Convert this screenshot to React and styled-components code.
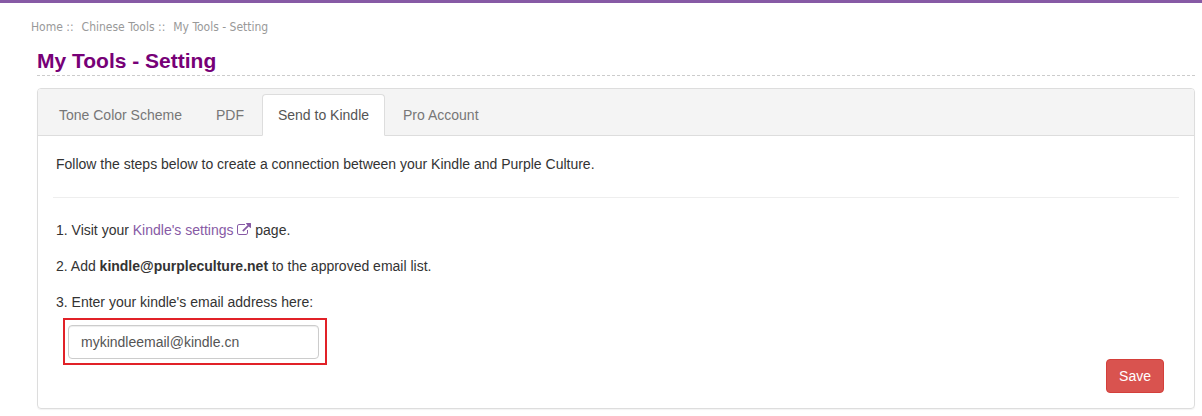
import React, { useState } from "react";
import styled, { createGlobalStyle } from "styled-components";

const GlobalStyle = createGlobalStyle`
  *, *::before, *::after { box-sizing: border-box; }
  body {
    margin: 0;
    background: #fff;
    color: #333;
    font: 14px/20px "Liberation Sans", Arial, sans-serif;
  }
`;

const Page = styled.div`
  border-top: 3px solid #875aa5;
`;

const Breadcrumb = styled.nav`
  display: flex;
  gap: 8px;
  padding: 14px 31px 0;
  color: #999;
  font: 12px/20px "DejaVu Sans Condensed", Tahoma, sans-serif;
`;

const Crumb = styled.a`
  color: inherit;
  text-decoration: none;
`;

const Main = styled.main`
  padding: 12px 7px 8px 37px;
`;

const Title = styled.h1`
  margin: 0 0 12px;
  padding-bottom: 2px;
  border-bottom: 1px dashed #ccc;
  color: #770077;
  font-size: 21px;
  line-height: 24px;
`;

const Panel = styled.section`
  border: 1px solid #ddd;
  border-radius: 4px;
  box-shadow: 0 1px 1px rgba(0, 0, 0, 0.05);
`;

const Tabs = styled.div`
  display: flex;
  gap: 2px;
  padding: 5px 5px 0;
  border-bottom: 1px solid #ddd;
  border-radius: 3px 3px 0 0;
  background: #f4f4f4;
`;

const Tab = styled.button`
  margin: 0 0 -1px;
  padding: 10px 15px;
  border: 1px solid ${(p) => (p.$active ? "#ddd" : "transparent")};
  border-bottom-color: ${(p) => (p.$active ? "#fff" : "transparent")};
  border-radius: 4px 4px 0 0;
  background: ${(p) => (p.$active ? "#fff" : "transparent")};
  color: ${(p) => (p.$active ? "#555" : "#777")};
  font: inherit;
  cursor: pointer;
`;

const Body = styled.form`
  padding: 18px 15px 15px;
`;

const Text = styled.p`
  margin: 0 0 16px;
  padding: 0 3px;
`;

const Divider = styled.hr`
  margin: 23px 0 22px;
  border: 0;
  border-top: 1px solid #eee;
`;

const Link = styled.a`
  color: #875aa5;
  text-decoration: none;
`;

const LinkIcon = styled.svg`
  width: 14px;
  height: 14px;
  fill: currentColor;
  vertical-align: -2px;
`;

const FieldLabel = styled.label`
  display: block;
  margin-bottom: 6px;
  padding: 0 3px;
`;

const Highlight = styled.div`
  width: 264px;
  max-width: 100%;
  margin-left: 10px;
  padding: 5px 6px 4px 3px;
  border: 2px solid #e12128;
`;

const EmailInput = styled.input`
  display: block;
  width: 100%;
  height: 34px;
  padding: 6px 12px;
  border: 1px solid #ccc;
  border-radius: 4px;
  box-shadow: inset 0 1px 1px rgba(0, 0, 0, 0.075);
  background: #fff;
  color: #555;
  font: inherit;
`;

const Actions = styled.div`
  display: flex;
  justify-content: flex-end;
  margin-top: -6px;
  padding-right: 15px;
`;

const SaveButton = styled.button`
  padding: 6px 12px;
  border: 1px solid #d43f3a;
  border-radius: 4px;
  background: #d9534f;
  color: #fff;
  font: inherit;
  cursor: pointer;
`;

const tabs = ["Tone Color Scheme", "PDF", "Send to Kindle", "Pro Account"];

export default function App() {
  const [active, setActive] = useState("Send to Kindle");
  return (
    <>
      <GlobalStyle />
      <Page>
        <Breadcrumb aria-label="Breadcrumb">
          <span><Crumb href="#home">Home</Crumb> ::</span>
          <span><Crumb href="#tools">Chinese Tools</Crumb> ::</span>
          <span>My Tools - Setting</span>
        </Breadcrumb>
        <Main>
          <Title>My Tools - Setting</Title>
          <Panel>
            <Tabs role="tablist">
              {tabs.map((name) => (
                <Tab
                  key={name}
                  type="button"
                  role="tab"
                  aria-selected={name === active}
                  $active={name === active}
                  onClick={() => setActive(name)}
                >
                  {name}
                </Tab>
              ))}
            </Tabs>
            <Body onSubmit={(e) => e.preventDefault()}>
              <Text>
                Follow the steps below to create a connection between your Kindle and Purple Culture.
              </Text>
              <Divider />
              <Text>
                1. Visit your{" "}
                <Link href="#kindle-settings">
                  Kindle's settings{" "}
                  <LinkIcon viewBox="0 0 1792 1792" aria-hidden="true">
                    <path d="M1408 928v320q0 119-84.500 203.500t-203.500 84.500h-832q-119 0-203.500-84.500t-84.500-203.500v-832q0-119 84.500-203.500t203.500-84.500h704q14 0 23 9t9 23v64q0 14-9 23t-23 9h-704q-66 0-113 47t-47 113v832q0 66 47 113t113 47h832q66 0 113-47t47-113v-320q0-14 9-23t23-9h64q14 0 23 9t9 23zm384-864v512q0 26-19 45t-45 19-45-19l-176-176-652 652q-10 10-23 10t-23-10l-114-114q-10-10-10-23t10-23l652-652-176-176q-19-19-19-45t19-45 45-19h512q26 0 45 19t19 45z" />
                  </LinkIcon>
                </Link>{" "}
                page.
              </Text>
              <Text>
                2. Add <strong>kindle@purpleculture.net</strong> to the approved email list.
              </Text>
              <FieldLabel htmlFor="kindle-email">3. Enter your kindle's email address here:</FieldLabel>
              <Highlight>
                <EmailInput id="kindle-email" type="email" defaultValue="mykindleemail@kindle.cn" />
              </Highlight>
              <Actions>
                <SaveButton type="submit">Save</SaveButton>
              </Actions>
            </Body>
          </Panel>
        </Main>
      </Page>
    </>
  );
}
